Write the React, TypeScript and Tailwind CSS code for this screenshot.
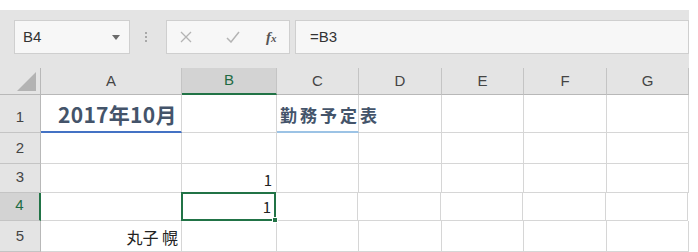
import React from "react";

const jp = "font-['Noto_Sans_CJK_JP',sans-serif]";
const ui = "font-['Liberation_Sans','Noto_Sans_CJK_JP',sans-serif]";

const cols = ["A", "B", "C", "D", "E", "F", "G"];
const widths = ["w-[141px]", "w-[95px]", "w-[82px]", "w-[83px]", "w-[82px]", "w-[83px]", "w-[82px]"];
const rowHeights = ["h-[38px]", "h-[31px]", "h-[29px]", "h-[28px]", "h-[31px]"];

function NameBox() {
  return (
    <div className="flex h-[34px] w-[116px] items-center justify-between border border-[#cfcfcf] bg-[#f7f7f7] pl-[8px] pr-[9px]">
      <span className={`${ui} text-[15px] text-[#333]`}>B4</span>
      <svg width="8" height="5" viewBox="0 0 8 5">
        <path d="M0 0h8L4 5z" fill="#6b6b6b" />
      </svg>
    </div>
  );
}

function FormulaButtons() {
  return (
    <div className="flex h-[34px] w-[124px] items-center border border-[#cfcfcf] bg-[#f7f7f7]">
      <svg className="ml-[13px]" width="12" height="12" viewBox="0 0 12 12">
        <path d="M1 1l10 10M11 1L1 11" stroke="#b4b4b4" strokeWidth="1.3" />
      </svg>
      <svg className="ml-[34px]" width="14" height="12" viewBox="0 0 14 12">
        <path d="M1 7l4 4 8-10" stroke="#b4b4b4" strokeWidth="1.5" fill="none" />
      </svg>
      <span className="ml-[26px] font-['Liberation_Serif',serif] text-[15px] font-bold italic text-[#555]">
        f<span className="text-[11px]">x</span>
      </span>
    </div>
  );
}

function Toolbar() {
  return (
    <div className="flex h-[58px] items-start gap-0 pl-[14px] pt-[10px]">
      <NameBox />
      <div className="ml-[15px] mr-[19px] flex h-[34px] flex-col items-center justify-center gap-[2px]">
        <span className="h-[2px] w-[2px] bg-[#a8a8a8]" />
        <span className="h-[2px] w-[2px] bg-[#a8a8a8]" />
        <span className="h-[2px] w-[2px] bg-[#a8a8a8]" />
      </div>
      <FormulaButtons />
      <div className="ml-[5px] flex h-[34px] flex-1 items-center border border-[#cfcfcf] bg-[#f7f7f7] pl-[14px]">
        <span className={`${ui} text-[15px] text-[#333]`}>=B3</span>
      </div>
    </div>
  );
}

function HeaderRow() {
  return (
    <div className="flex h-[27px]">
      <div className="relative w-[41px] border-r border-b border-[#b8b8b8]">
        <svg className="absolute right-[4px] bottom-[3px]" width="19" height="19" viewBox="0 0 19 19">
          <path d="M19 0v19H0z" fill="#b3b3b3" />
        </svg>
      </div>
      {cols.map((c, i) => (
        <div
          key={c}
          className={`${widths[i]} flex items-center justify-center border-r border-[#c4c4c4] ${ui} text-[15px] ${
            c === "B"
              ? "border-b-2 border-b-[#217346] bg-[#d3d3d3] text-[#1e6b43]"
              : "border-b border-b-[#b8b8b8] text-[#444]"
          }`}
        >
          {c}
        </div>
      ))}
    </div>
  );
}

function Cell({
  w,
  className = "",
  children,
}: {
  w: string;
  className?: string;
  children?: React.ReactNode;
}) {
  return <div className={`${w} flex items-end border-r border-b border-[#d6d6d6] ${className}`}>{children}</div>;
}

function Row({ n, children }: { n: number; children: React.ReactNode }) {
  const active = n === 4;
  return (
    <div className={`flex ${rowHeights[n - 1]}`}>
      <div
        className={`flex w-[41px] items-end justify-center border-b border-[#c4c4c4] pb-[4px] ${ui} text-[15px] ${
          active
            ? "border-r-2 border-r-[#217346] bg-[#d3d3d3] text-[#1e6b43]"
            : "border-r border-r-[#b8b8b8] bg-[#e4e4e4] text-[#444]"
        }`}
      >
        {n}
      </div>
      {children}
    </div>
  );
}

export default function App() {
  return (
    <div className="h-[252px] w-[698px] overflow-hidden bg-white">
      <div className="h-[10px]" />
      <div className="w-[689px] bg-[#e4e4e4]">
        <Toolbar />
        <HeaderRow />
      </div>
      <div className="w-[698px]">
        <Row n={1}>
          <Cell w={widths[0]} className="border-b-2 border-b-[#4472c4] pb-[6px] pl-[17px]">
            <span className={`${jp} text-[21px] leading-none font-bold tracking-[0.3px] text-[#44546a]`}>2017年10月</span>
          </Cell>
          <Cell w={widths[1]} />
          <Cell w={widths[2]} className="border-b-2 border-b-[#9cc3e5] overflow-visible pb-[8px] pl-[3px]">
            <span className={`${jp} text-[17px] leading-none font-bold tracking-[3px] whitespace-nowrap text-[#44546a]`}>
              勤務予定表
            </span>
          </Cell>
          {widths.slice(3).map((w, i) => (
            <Cell key={i} w={w} />
          ))}
        </Row>
        <Row n={2}>
          {widths.map((w, i) => (
            <Cell key={i} w={w} />
          ))}
        </Row>
        <Row n={3}>
          <Cell w={widths[0]} />
          <Cell w={widths[1]} className="justify-end pr-[4px] pb-[5px]">
            <span className={`${jp} text-[15px] leading-none text-[#222]`}>1</span>
          </Cell>
          {widths.slice(2).map((w, i) => (
            <Cell key={i} w={w} />
          ))}
        </Row>
        <Row n={4}>
          <Cell w={widths[0]} />
          <div className="relative flex w-[95px] items-end justify-end border-2 border-[#217346] -ml-[1px] -mt-[1px] pr-[3px] pb-[5px]">
            <span className={`${jp} text-[15px] leading-none text-[#222]`}>1</span>
            <span className="absolute -right-[4px] -bottom-[4px] h-[6px] w-[6px] border border-white bg-[#217346]" />
          </div>
          {widths.slice(2).map((w, i) => (
            <Cell key={i} w={w} />
          ))}
        </Row>
        <Row n={5}>
          <Cell w={widths[0]} className="justify-end pr-[3px] pb-[6px]">
            <span className={`${jp} text-[16px] leading-none text-[#222]`}>丸子 幌</span>
          </Cell>
          {widths.slice(1).map((w, i) => (
            <Cell key={i} w={w} />
          ))}
        </Row>
      </div>
    </div>
  );
}
